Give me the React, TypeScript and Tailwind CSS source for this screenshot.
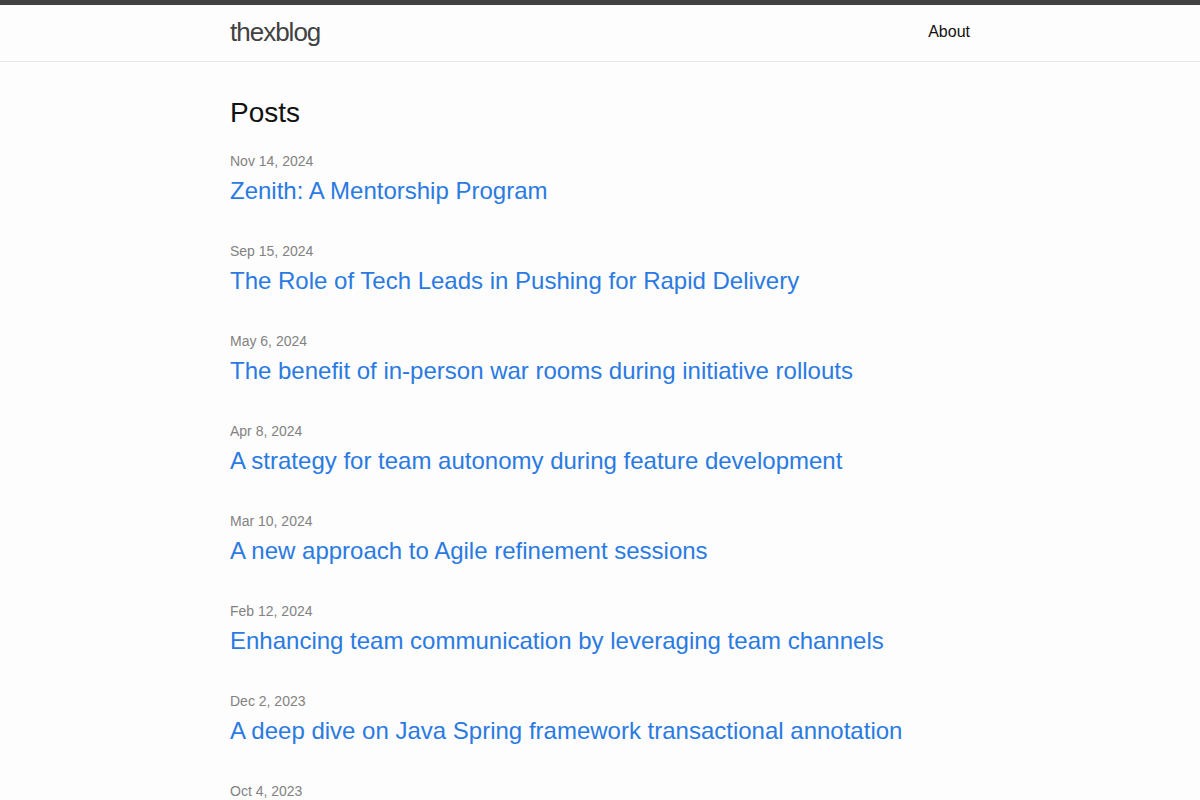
const posts = [
  { date: "Nov 14, 2024", title: "Zenith: A Mentorship Program" },
  { date: "Sep 15, 2024", title: "The Role of Tech Leads in Pushing for Rapid Delivery" },
  { date: "May 6, 2024", title: "The benefit of in-person war rooms during initiative rollouts" },
  { date: "Apr 8, 2024", title: "A strategy for team autonomy during feature development" },
  { date: "Mar 10, 2024", title: "A new approach to Agile refinement sessions" },
  { date: "Feb 12, 2024", title: "Enhancing team communication by leveraging team channels" },
  { date: "Dec 2, 2023", title: "A deep dive on Java Spring framework transactional annotation" },
  { date: "Oct 4, 2023", title: "Lessons learned from running on-call rotations" },
]

export default function App() {
  return (
    <div
      className="min-h-screen bg-[#fdfdfd] text-[#111111]"
      style={{ fontFamily: '"Liberation Sans", Arial, sans-serif' }}
    >
      <header className="border-t-[5px] border-t-[#424242] border-b border-b-[#e8e8e8]">
        <div className="w-[740px] mx-auto flex items-center justify-between h-[56px] pb-[2px]">
          <a href="#" className="text-[26px] font-light tracking-[-1px] text-[#424242] leading-[54px]">
            thexblog
          </a>
          <nav>
            <a href="#" className="text-[16px] text-[#111111] leading-[54px]">
              About
            </a>
          </nav>
        </div>
      </header>

      <main className="w-[740px] mx-auto pt-[30px] pb-[30px]">
        <h2 className="text-[28px] leading-[42px] mb-[15px] text-[#111111]">Posts</h2>
        <ul>
          {posts.map((p) => (
            <li key={p.title} className="mb-[30px]">
              <div className="text-[14px] leading-[24px] text-[#828282]">{p.date}</div>
              <h3 className="text-[24px] leading-[36px]">
                <a href="#" className="text-[#2a7ae2]">
                  {p.title}
                </a>
              </h3>
            </li>
          ))}
        </ul>
      </main>
    </div>
  )
}
